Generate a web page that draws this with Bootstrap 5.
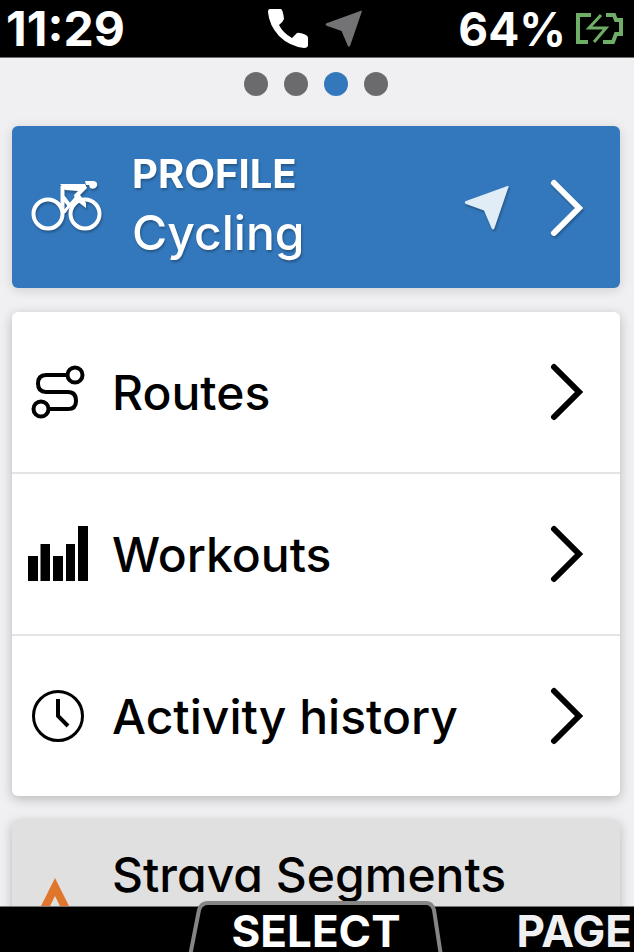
<!DOCTYPE html>
<html lang="en">
<head>
<meta charset="utf-8">
<meta name="viewport" content="width=device-width, initial-scale=1">
<title>Bike computer menu</title>
<link href="https://cdn.jsdelivr.net/npm/bootstrap@5.3.0/dist/css/bootstrap.min.css" rel="stylesheet">
<style>
  body { font-family: Inter, "Liberation Sans", sans-serif; font-feature-settings: "cv11"; background: #f0f0f2; color: #000; }
  svg { display: block; flex: none; }
  .status-bar { height: 58px; padding: 0 10px 0 6px; background: #000; color: #fff; font-size: 48px; line-height: 58px; border-bottom: 1px solid #6e6e6e; font-feature-settings: "case"; }
  .charge { font-size: 46px; }
  .side { flex: 1 1 0; }
  .pager { gap: 16px; padding: 14px 2px 30px 0; }
  .pager button { width: 24px; height: 24px; padding: 0; border: 0; border-radius: 50%; background: #6b6b6d; }
  .pager button[aria-current] { background: #3378bc; }
  .menu { gap: 24px; padding: 0 14px 0 12px; }
  .panel { flex: none; border-radius: 6px; box-shadow: 0 3px 12px rgba(0, 0, 0, .24); background: #fff; }
  .panel a { color: inherit; height: 160px; padding: 0 36px 0 16px; font-size: 48px; font-weight: 500; line-height: 58px; }
  .panel a + a { height: 162px; border-top: 2px solid #e4e4e4; }
  .panel .text { margin-left: 24px; padding-top: 2px; }
  .profile { background: #3378bc; color: #fff; box-shadow: 0 2px 12px rgba(0, 0, 0, .14); }
  .profile a { height: 162px; padding-top: 2px; }
  .profile .glyph, .profile .text { filter: drop-shadow(1px 2px 1px rgba(0, 0, 0, .28)); }
  .profile .text { margin-left: 28px; padding: 0 0 10px; }
  .profile strong { font-size: 40px; line-height: 60px; }
  .profile .arrow { margin-right: 40px; }
  .strava { background: #e0e0e0; }
  .strava a { padding-top: 24px; }
  .strava svg { margin-top: 32px; }
  .soft-keys { height: 46px; background: #000; border-top: 1px solid #777; }
  .soft-keys button { background: none; border: 0; padding: 0; color: #fff; font-size: 44px; line-height: 48px; }
  .soft-keys .page-key { color: #f0f0f2; margin-right: 2px; }
  .select-key { width: 256px; height: 51px; margin: -6px 0 0 -2px; }
  .select-key svg { top: 0; left: 0; }
  .select-key button { padding-top: 6px; }
</style>
<script src="https://cdn.jsdelivr.net/npm/bootstrap@5.3.0/dist/js/bootstrap.bundle.min.js"></script>
</head>
<body class="vh-100 d-flex flex-column overflow-hidden">
<svg width="0" height="0" class="position-absolute" aria-hidden="true">
  <symbol id="chevron" viewBox="0 0 34 60"><path d="M4 5 29 30 4 55" fill="none" stroke="currentColor" stroke-width="6" stroke-linecap="round" stroke-linejoin="miter"/></symbol>
  <symbol id="arrow" viewBox="0 0 46 46"><path d="M43.500 1Q45 .500 44.500 2L30.500 43Q29 46 27.500 43L20 25.500 2 19Q-.500 17.500 2 16Z" fill="currentColor"/></symbol>
</svg>

<header class="status-bar d-flex align-items-center flex-shrink-0 fw-bold">
  <div class="side">11:29</div>
  <div class="d-flex align-items-center gap-3">
    <svg width="42" height="42" viewBox="0 0 42 42" aria-label="Phone connected"><path d="M3 1H14Q16 2 17 11Q16 14 12 17Q16 25 25 30L30 25Q32 24 39 27Q41 28 41 30V37Q41 40 37 40Q22 38 12 28Q2 17 1 4Q1 1 3 1Z" fill="#fff"/></svg>
    <svg width="38" height="38" color="#737375" aria-label="Location"><use href="#arrow"/></svg>
  </div>
  <div class="side d-flex align-items-center justify-content-end gap-2">
    <span class="charge">64%</span>
    <svg width="50" height="36" viewBox="0 0 50 36" fill="none" stroke="#6fae66" stroke-width="4" aria-label="Charging"><path d="M17 4H4V31H14M32 4H40L42 9H47V23H42L39 31H29"/><path d="M27 4 15 17H32L20 31" stroke-width="3"/></svg>
  </div>
</header>

<main class="flex-grow-1 overflow-hidden d-flex flex-column">
  <nav class="pager d-flex justify-content-center" aria-label="Pages">
    <button type="button" aria-label="Page 1"></button>
    <button type="button" aria-label="Page 2"></button>
    <button type="button" aria-label="Page 3" aria-current="page"></button>
    <button type="button" aria-label="Page 4"></button>
  </nav>
  <div class="menu d-flex flex-column">
    <div class="panel profile">
      <a href="#" class="d-flex align-items-center text-decoration-none">
        <svg class="glyph" width="76" height="56" viewBox="0 0 76 56" fill="none" stroke="#fff"><circle cx="20" cy="34" r="14.500" stroke-width="4"/><circle cx="57" cy="34" r="14.500" stroke-width="4"/><path d="M34.500 6V30L37 33M35 17 42 26" stroke-width="4"/><path d="M32 4H57L59 8 52 15 58 23V28L54 25 47 19 46 15 50 11 37 10Z" fill="#fff" stroke="none"/><path d="M48 18 36 32" stroke-width="3"/><path d="M57 1H66Q70 2 69 6Q67 10 62 8L61 5H58Z" fill="#fff" stroke="none"/></svg>
        <span class="text d-flex flex-column flex-grow-1"><strong>PROFILE</strong><span>Cycling</span></span>
        <svg class="arrow glyph" width="46" height="46" color="#e1edf6"><use href="#arrow"/></svg>
        <svg class="glyph" width="34" height="60"><use href="#chevron"/></svg>
      </a>
    </div>
    <div class="panel">
      <a href="#" class="d-flex align-items-center text-decoration-none">
        <svg width="60" height="56" viewBox="0 0 60 56" fill="none" stroke="#000" stroke-width="4"><circle cx="47" cy="11" r="7.500"/><circle cx="13" cy="45" r="7.500"/><path d="M39 11H18Q10 11 10 19.500Q10 28 18 28H40Q48 28 48 37Q48 45 40 45H21"/></svg>
        <span class="text flex-grow-1">Routes</span>
        <svg width="34" height="60"><use href="#chevron"/></svg>
      </a>
      <a href="#" class="d-flex align-items-center text-decoration-none">
        <svg width="60" height="56" viewBox="0 0 60 56"><path d="M0 30H10V55H0ZM12.500 18H22V55H12.500ZM25 30H35V55H25ZM38 18H47V55H38ZM50 0H60V55H50Z"/></svg>
        <span class="text flex-grow-1">Workouts</span>
        <svg width="34" height="60"><use href="#chevron"/></svg>
      </a>
      <a href="#" class="d-flex align-items-center text-decoration-none">
        <svg width="60" height="56" viewBox="0 0 60 56" fill="none" stroke="#000"><circle cx="30" cy="28" r="24.500" stroke-width="3"/><path d="M30 11V28L40 38" stroke-width="4"/></svg>
        <span class="text flex-grow-1">Activity history</span>
        <svg width="34" height="60"><use href="#chevron"/></svg>
      </a>
    </div>
    <div class="panel strava">
      <a href="#" class="d-flex align-items-start text-decoration-none">
        <svg width="60" height="56" viewBox="0 0 60 56"><path d="M27 2 46 40H37L27 20 17 40H8Z" fill="#e0762c"/></svg>
        <span class="text flex-grow-1">Strava Segments</span>
      </a>
    </div>
  </div>
</main>

<footer class="soft-keys d-flex flex-shrink-0">
  <div class="side"></div>
  <div class="select-key position-relative text-center">
    <svg class="position-absolute" width="256" height="51" viewBox="0 0 256 51"><path d="M2 55 11 9Q13 2 20 2H238Q244 2 246 9L253 55" fill="#000" stroke="#858585" stroke-width="4"/></svg>
    <button type="button" class="position-relative fw-bold">SELECT</button>
  </div>
  <div class="side text-end"><button type="button" class="page-key fw-bold">PAGE</button></div>
</footer>
</body>
</html>
